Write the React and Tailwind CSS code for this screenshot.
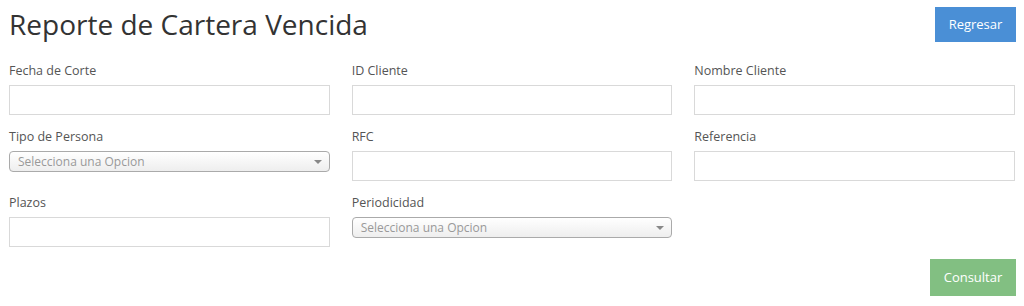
import React from 'react';

const font = { fontFamily: '"Open Sans", "Liberation Sans", sans-serif' };

const TextField = ({ label }) => (
  <div className="flex flex-col">
    <label className="text-[12.5px] leading-[17px] text-[#555] h-[17px] mb-[6px]">{label}</label>
    <input className="h-[30px] w-full border border-[#d9d9d9] bg-white outline-none" />
  </div>
);

const SelectField = ({ label }) => (
  <div className="flex flex-col">
    <label className="text-[12.5px] leading-[17px] text-[#555] h-[17px] mb-[6px]">{label}</label>
    <div className="h-[21px] w-full flex items-center justify-between rounded-[4px] border border-[#aaa] bg-gradient-to-b from-white to-[#eeeeee] pl-[8px] pr-[7px]">
      <span className="text-[12px] text-[#999]">Selecciona una Opcion</span>
      <span className="w-0 h-0 border-l-[4px] border-r-[4px] border-t-[4px] border-l-transparent border-r-transparent border-t-[#888]" />
    </div>
  </div>
);

const App = () => {
  return (
    <div className="w-[1024px] h-[306px] bg-white" style={font}>
      <div className="flex items-start justify-between pl-[9px] pr-[8px] pt-[4px]">
        <h1 className="text-[28px] leading-[40px] text-[#333] font-normal">Reporte de Cartera Vencida</h1>
        <button className="mt-[3px] w-[81px] h-[35px] bg-[#4a8fd6] text-white text-[13px]">Regresar</button>
      </div>
      <div className="grid grid-cols-3 gap-x-[22px] gap-y-[13px] pl-[9px] pr-[9px] mt-[18px]">
        <TextField label="Fecha de Corte" />
        <TextField label="ID Cliente" />
        <TextField label="Nombre Cliente" />
        <SelectField label="Tipo de Persona" />
        <TextField label="RFC" />
        <TextField label="Referencia" />
        <TextField label="Plazos" />
        <SelectField label="Periodicidad" />
        <div />
      </div>
      <div className="flex justify-end pr-[8px] mt-[12px]">
        <button className="w-[86px] h-[37px] bg-[#82bf82] text-white text-[13px]">Consultar</button>
      </div>
    </div>
  );
};

export default App;
